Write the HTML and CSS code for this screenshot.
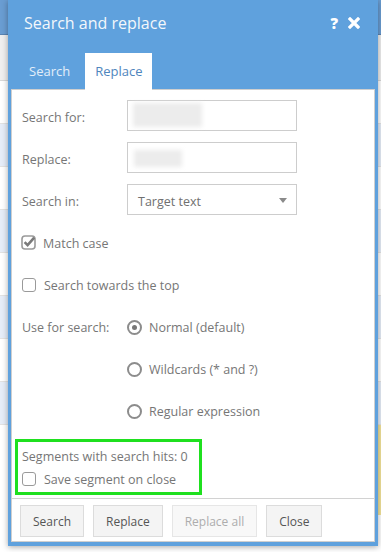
FILE: index.html
```html
<!DOCTYPE html>
<html>
<head>
<meta charset="utf-8">
<link rel="stylesheet" href="styles.css">
</head>
<body>
<div class="page">
  <div class="appbar"></div>
  <div class="toolbar"></div>
  <div class="row"></div>
  <div class="row alt"></div>
  <div class="row"></div>
  <div class="row alt"></div>
  <div class="row"></div>
  <div class="row alt"></div>
  <div class="row"></div>
  <div class="row alt"></div>
  <div class="row split"><span class="cell"></span><span class="cell yellow"></span></div>
</div>

<div class="dialog">
  <div class="titlebar">
    <span class="title">Search and replace</span>
    <span class="tools">
      <span class="help">?</span>
      <svg class="close" width="12" height="12" viewBox="0 0 12 12"><path d="M2 2 L10 10 M10 2 L2 10" stroke="#fff" stroke-width="3.2" stroke-linecap="square"/></svg>
    </span>
  </div>
  <div class="tabs">
    <span class="tab">Search</span>
    <span class="tab active">Replace</span>
  </div>
  <div class="panel">
    <div class="form">
      <div class="field">
        <span class="label">Search for:</span>
        <div class="input in1"><span class="blob b1"></span></div>
      </div>
      <div class="field">
        <span class="label">Replace:</span>
        <div class="input in2"><span class="blob b2"></span></div>
      </div>
      <div class="field">
        <span class="label">Search in:</span>
        <div class="input select"><span class="seltext">Target text</span><span class="arrow"></span></div>
      </div>
    </div>
    <div class="options">
      <div class="opt">
        <svg class="cbox" width="16" height="16" viewBox="0 0 16 16"><rect x="1" y="2" width="13" height="13" rx="3" fill="#fff" stroke="#9a9a9a" stroke-width="1.6"/><path d="M3.6 8.2 L6.6 11.2 L13.2 3.6" fill="none" stroke="#7a7a7a" stroke-width="2.6" stroke-linejoin="miter"/></svg>
        <span>Match case</span>
      </div>
      <div class="opt">
        <span class="cb"></span>
        <span>Search towards the top</span>
      </div>
      <div class="opt">
        <span class="label">Use for search:</span>
        <span class="radio on"></span>
        <span>Normal (default)</span>
      </div>
      <div class="opt">
        <span class="label"></span>
        <span class="radio"></span>
        <span>Wildcards (* and ?)</span>
      </div>
      <div class="opt">
        <span class="label"></span>
        <span class="radio"></span>
        <span>Regular expression</span>
      </div>
    </div>
    <div class="hits">
      <div class="hitcount">Segments with search hits: 0</div>
      <div class="opt small">
        <span class="cb"></span>
        <span>Save segment on close</span>
      </div>
    </div>
    <div class="footer">
      <span class="btn">Search</span>
      <span class="btn">Replace</span>
      <span class="btn disabled">Replace all</span>
      <span class="btn">Close</span>
    </div>
  </div>
</div>
</body>
</html>
```

FILE: styles.css
```css
html, body {
  margin: 0;
  padding: 0;
}
body {
  width: 381px;
  height: 552px;
  overflow: hidden;
  position: relative;
  font-family: "Open Sans", "Noto Sans", sans-serif;
  background: #fff;
}

/* background page */
.page {
  display: flex;
  flex-direction: column;
}
.appbar {
  height: 34px;
  background: #6a9dd2;
  border-bottom: 1px solid #5a84b2;
}
.toolbar {
  height: 45px;
  background: #efefef;
  border-bottom: 1px solid #d8d8d8;
}
.row {
  height: 42px;
  background: #fff;
  border-bottom: 1px solid #e2e2e2;
}
.row.alt {
  background: #e6edf8;
}
.row.split {
  display: flex;
  height: 90px;
  border: none;
}
.cell {
  flex: 0 0 298px;
  background: #fff;
}
.cell.yellow {
  flex: 1;
  background: #f2e39a;
}

/* dialog */
.dialog {
  position: absolute;
  left: 8px;
  top: 0;
  width: 370px;
  box-sizing: border-box;
  background: #5fa1dd;
  padding: 0 3px 4px;
  box-shadow: 0 1px 6px rgba(0, 0, 0, 0.35);
}
.titlebar {
  height: 53px;
  box-sizing: border-box;
  padding: 12px 15px 0 13px;
  display: flex;
  justify-content: space-between;
  align-items: flex-start;
}
.title {
  color: #f3f7fb;
  font-size: 16px;
  line-height: 22px;
}
.tools {
  display: flex;
  align-items: center;
  gap: 10px;
  height: 22px;
}
.help {
  color: #fff;
  font-weight: 800;
  font-size: 15px;
  line-height: 22px;
}
.close {
  display: block;
}
.tabs {
  height: 36px;
  display: flex;
  gap: 5px;
  padding-left: 8px;
  position: relative;
  z-index: 1;
}
.tab {
  padding: 0 10px;
  font-size: 13px;
  line-height: 37px;
  height: 36px;
  color: #e3eef9;
}
.tab.active {
  background: #fff;
  color: #4f86bd;
  height: 37px;
}
.panel {
  background: #fff;
  border: 1px solid #cfcfcf;
  box-sizing: border-box;
  height: 453px;
  display: flex;
  flex-direction: column;
  color: #767676;
  font-size: 12.5px;
}
.form {
  padding: 10px 10px 0;
  display: flex;
  flex-direction: column;
  gap: 11px;
}
.field {
  display: flex;
  align-items: center;
  height: 31px;
}
.field .label {
  padding-top: 3px;
}
.label {
  flex: 0 0 105px;
}
.input {
  width: 170px;
  height: 31px;
  box-sizing: border-box;
  border: 1px solid #cdcdcd;
  display: flex;
}
.in1 {
  padding: 2px 5px;
}
.in2 {
  padding: 7px 6px;
}
.blob {
  display: block;
  background: #ececec;
  filter: blur(2px);
}
.b1 {
  width: 69px;
  height: 24px;
}
.b2 {
  width: 48px;
  height: 17px;
}
.select {
  align-items: center;
  justify-content: space-between;
  padding: 0 9px 0 10px;
  color: #707070;
}
.seltext {
  padding-top: 3px;
}
.arrow {
  width: 0;
  height: 0;
  border-left: 4.5px solid transparent;
  border-right: 4.5px solid transparent;
  border-top: 5px solid #8a8a8a;
  margin-top: 1px;
}
.options {
  margin-top: 7px;
  padding: 0 10px;
  display: flex;
  flex-direction: column;
}
.opt {
  height: 42px;
  display: flex;
  align-items: center;
  gap: 8px;
}
.opt .label {
  margin-right: -8px;
}
.cbox {
  display: block;
  margin: -2px -2px 0 -1px;
}
.cb {
  width: 14px;
  height: 14px;
  box-sizing: border-box;
  border: 1.6px solid #9a9a9a;
  border-radius: 3px;
}
.radio {
  width: 15px;
  height: 15px;
  box-sizing: border-box;
  border: 2px solid #8c8c8c;
  border-radius: 50%;
  display: flex;
  align-items: center;
  justify-content: center;
  margin-right: -1px;
}
.radio.on::after {
  content: "";
  width: 5px;
  height: 5px;
  border-radius: 50%;
  background: #777;
}
.hits {
  margin: 7px 3px 0;
  width: 187px;
  height: 56px;
  box-sizing: border-box;
  border: 3px solid #1fe01f;
  padding: 6px 4px 0;
  display: flex;
  flex-direction: column;
}
.hitcount {
  line-height: 18px;
}
.opt.small {
  height: 29px;
}
.footer {
  margin-top: 3px;
  border-top: 1px solid #d2d2d2;
  padding: 6px 8px 0;
  display: flex;
  gap: 9px;
}
.btn {
  height: 32px;
  box-sizing: border-box;
  padding: 0 12px;
  border: 1px solid #dcdcdc;
  background: #f4f4f4;
  color: #555;
  font-size: 12px;
  line-height: 31px;
}
.btn.disabled {
  color: #adadad;
  background: #f8f8f8;
  border-color: #e6e6e6;
}
```
